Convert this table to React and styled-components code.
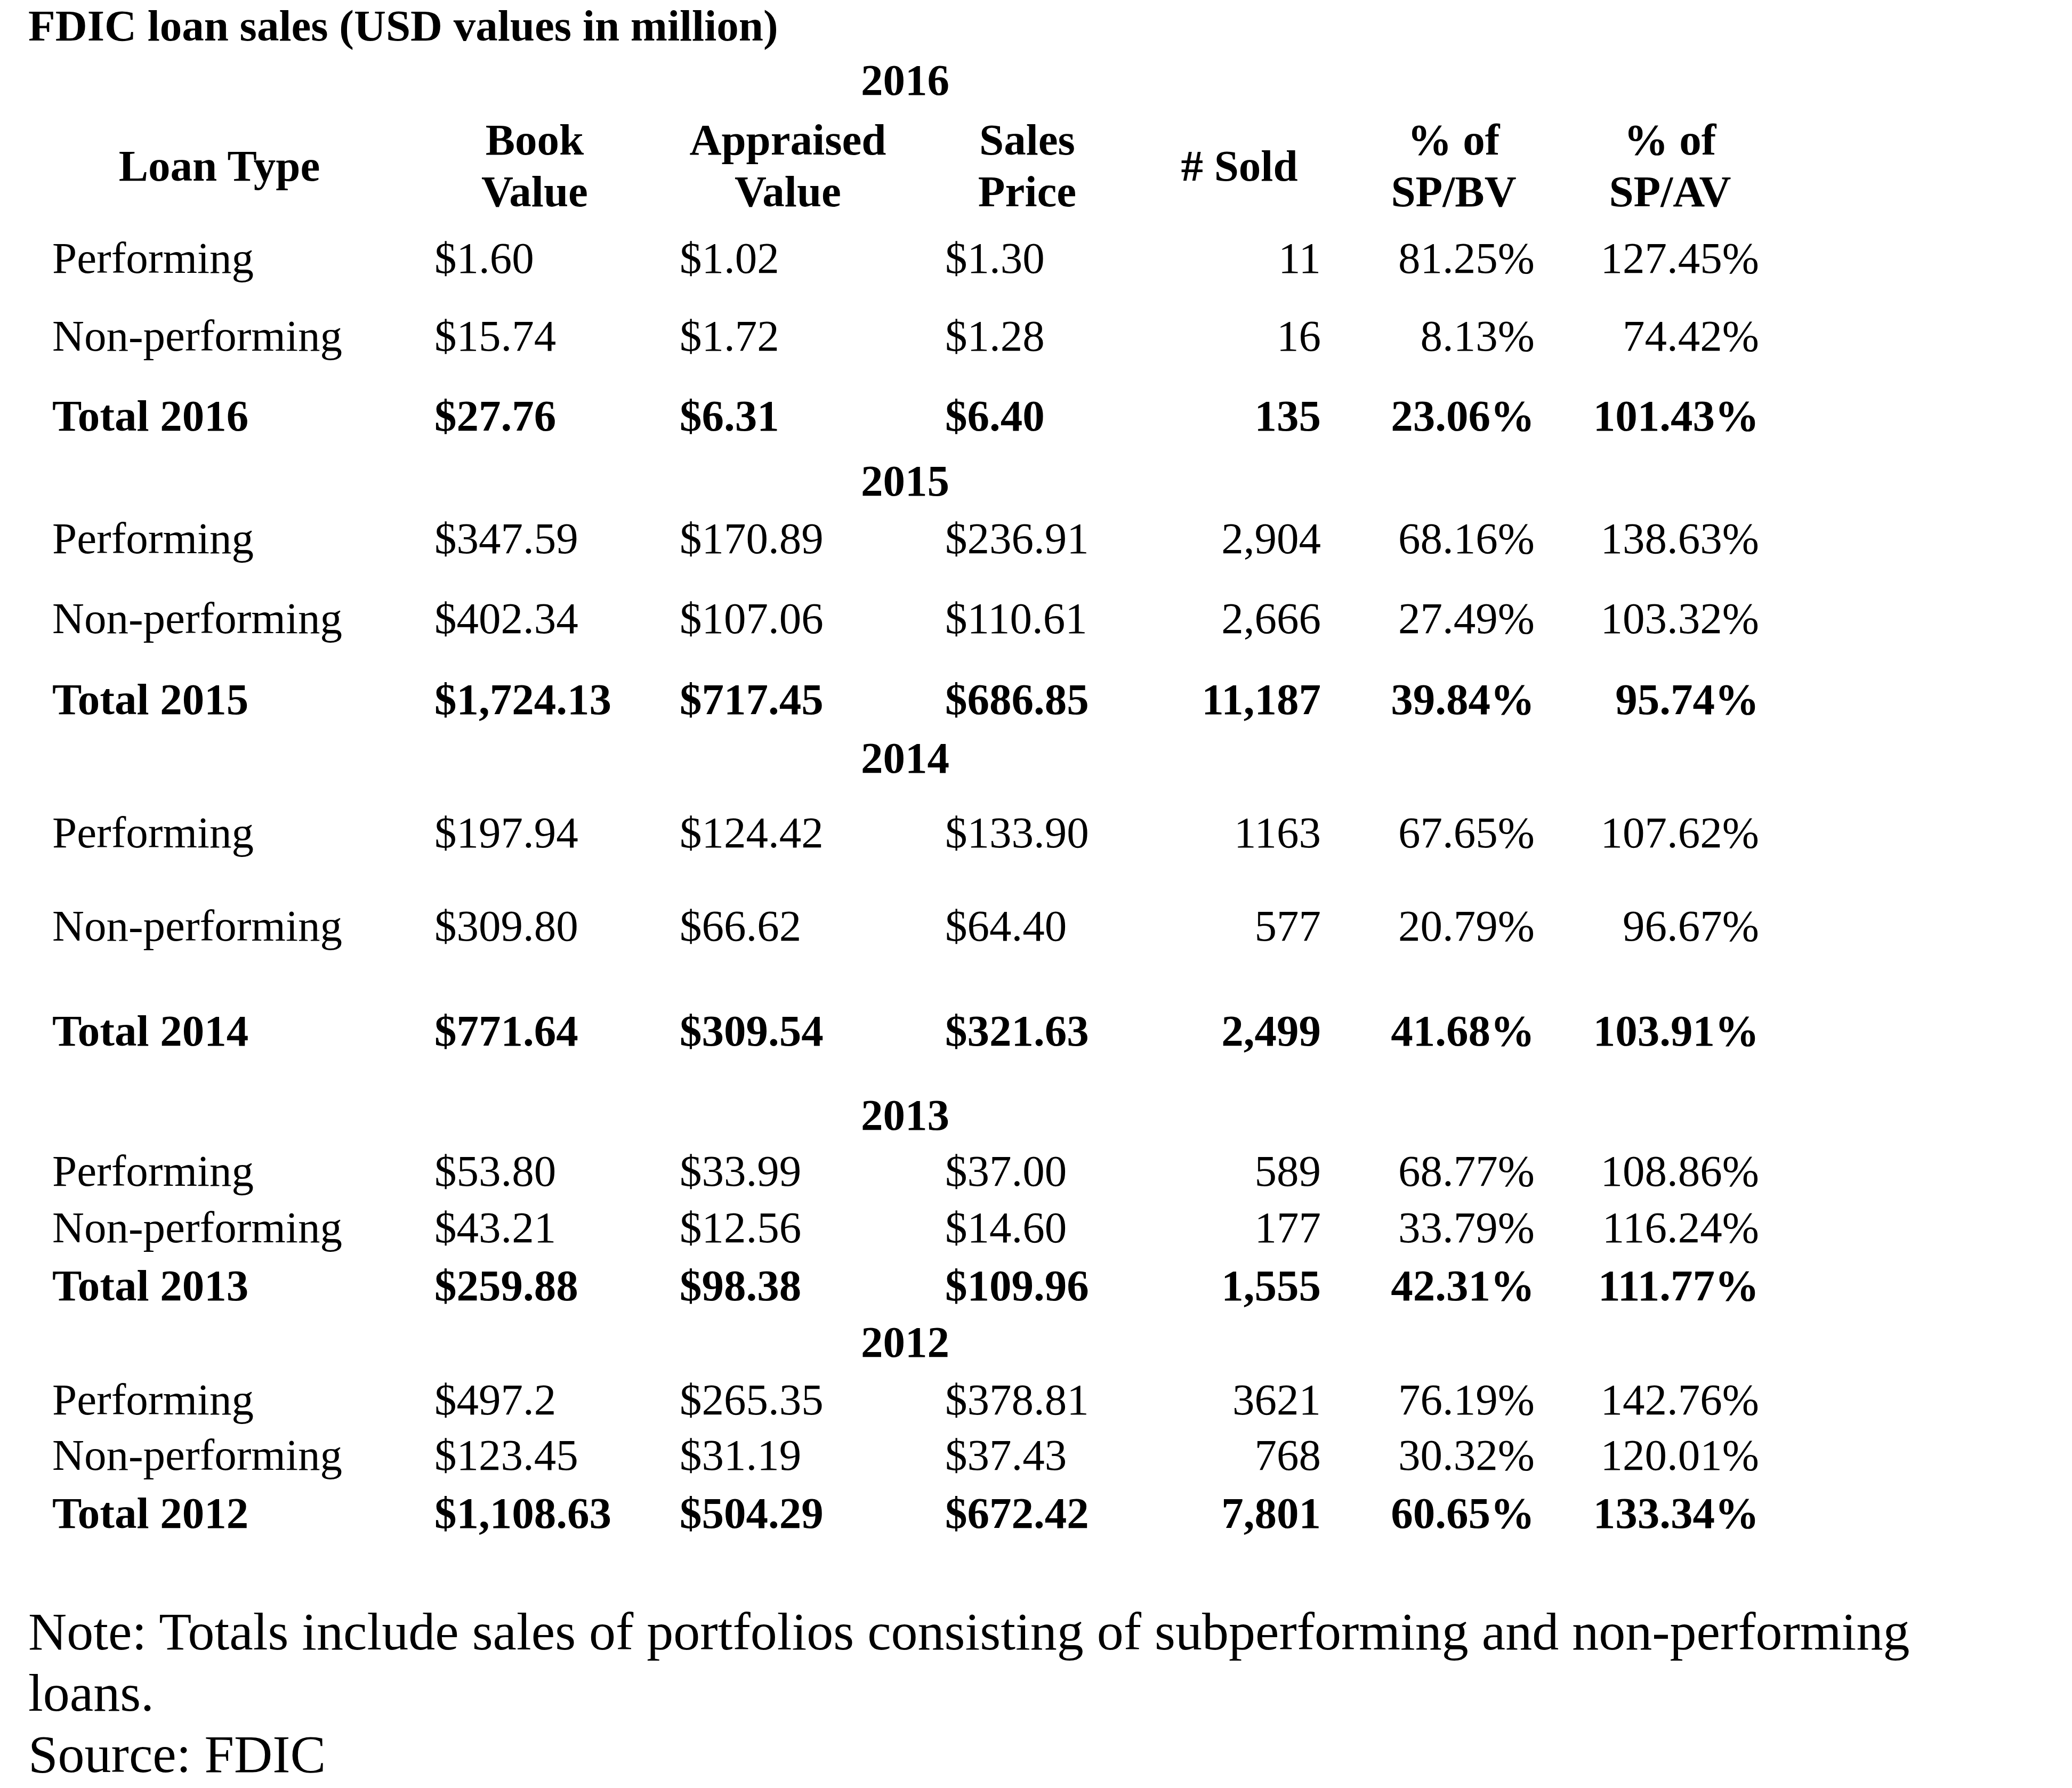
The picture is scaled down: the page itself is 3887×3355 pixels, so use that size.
import React from 'react';
import styled, { createGlobalStyle } from 'styled-components';

const GlobalStyle = createGlobalStyle`
  html, body {
    margin: 0;
    padding: 0;
    background: #ffffff;
  }
  body {
    font-family: "Liberation Serif", "Times New Roman", serif;
    color: #000000;
  }
`;

const columns = [
  { width: 717, align: 'left', pad: 45 },
  { width: 466, align: 'left', pad: 45 },
  { width: 484, align: 'left', pad: 39 },
  { width: 414, align: 'left', pad: 53 },
  { width: 382, align: 'right', pad: 38 },
  { width: 422, align: 'right', pad: 59 },
  { width: 390, align: 'right', pad: 28 },
];

const headers = [
  ['Loan Type'],
  ['Book', 'Value'],
  ['Appraised', 'Value'],
  ['Sales', 'Price'],
  ['# Sold'],
  ['% of', 'SP/BV'],
  ['% of', 'SP/AV'],
];

const sections = [
  {
    year: '2016',
    h: 112,
    rows: [
      { h: 146, cells: ['Performing', '$1.60', '$1.02', '$1.30', '11', '81.25%', '127.45%'] },
      { h: 150, cells: ['Non-performing', '$15.74', '$1.72', '$1.28', '16', '8.13%', '74.42%'] },
      { h: 122, bold: true, cells: ['Total 2016', '$27.76', '$6.31', '$6.40', '135', '23.06%', '101.43%'] },
    ],
  },
  {
    year: '2015',
    h: 108,
    rows: [
      { h: 150, cells: ['Performing', '$347.59', '$170.89', '$236.91', '2,904', '68.16%', '138.63%'] },
      { h: 152, cells: ['Non-performing', '$402.34', '$107.06', '$110.61', '2,666', '27.49%', '103.32%'] },
      { h: 110, bold: true, cells: ['Total 2015', '$1,724.13', '$717.45', '$686.85', '11,187', '39.84%', '95.74%'] },
    ],
  },
  {
    year: '2014',
    h: 140,
    rows: [
      { h: 175, cells: ['Performing', '$197.94', '$124.42', '$133.90', '1163', '67.65%', '107.62%'] },
      { h: 197, cells: ['Non-performing', '$309.80', '$66.62', '$64.40', '577', '20.79%', '96.67%'] },
      { h: 158, bold: true, cells: ['Total 2014', '$771.64', '$309.54', '$321.63', '2,499', '41.68%', '103.91%'] },
    ],
  },
  {
    year: '2013',
    h: 105,
    rows: [
      { h: 106, cells: ['Performing', '$53.80', '$33.99', '$37.00', '589', '68.77%', '108.86%'] },
      { h: 109, cells: ['Non-performing', '$43.21', '$12.56', '$14.60', '177', '33.79%', '116.24%'] },
      { h: 106, bold: true, cells: ['Total 2013', '$259.88', '$98.38', '$109.96', '1,555', '42.31%', '111.77%'] },
    ],
  },
  {
    year: '2012',
    h: 108,
    rows: [
      { h: 104, cells: ['Performing', '$497.2', '$265.35', '$378.81', '3621', '76.19%', '142.76%'] },
      { h: 109, cells: ['Non-performing', '$123.45', '$31.19', '$37.43', '768', '30.32%', '120.01%'] },
      { h: 213, bold: true, cells: ['Total 2012', '$1,108.63', '$504.29', '$672.42', '7,801', '60.65%', '133.34%'] },
    ],
  },
];

const App = () => (
  <Page>
    <GlobalStyle />
    <Title>FDIC loan sales (USD values in million)</Title>
    <Table>
      {sections.map((section, si) => (
        <React.Fragment key={section.year}>
          <YearRow $h={section.h}>{section.year}</YearRow>
          {si === 0 && (
            <HeaderRow>
              {headers.map((lines, i) => (
                <HeaderCell key={i}>
                  {lines.map((line) => (
                    <div key={line}>{line}</div>
                  ))}
                </HeaderCell>
              ))}
            </HeaderRow>
          )}
          {section.rows.map((row) => (
            <Row key={row.cells[0]} $h={row.h} $bold={row.bold}>
              {row.cells.map((cell, ci) => (
                <Cell key={ci} $align={columns[ci].align} $pad={columns[ci].pad}>
                  {cell}
                </Cell>
              ))}
            </Row>
          ))}
        </React.Fragment>
      ))}
    </Table>
    <Note>
      Note: Totals include sales of portfolios consisting of subperforming and non-performing loans.
      <br />
      Source: FDIC
    </Note>
  </Page>
);

export default App;

const Page = styled.div`
  padding-left: 53px;
  font-family: "Liberation Serif", "Times New Roman", serif;
`;

const Title = styled.div`
  font-size: 83px;
  font-weight: 700;
  line-height: 97px;
  height: 102px;
  white-space: nowrap;
`;

const Table = styled.div`
  display: grid;
  grid-template-columns: ${columns.map((c) => `${c.width}px`).join(' ')};
  width: ${columns.reduce((s, c) => s + c.width, 0)}px;
  font-size: 83px;
  line-height: 97px;
`;

const YearRow = styled.div`
  grid-column: 1 / -1;
  height: ${(p) => p.$h}px;
  padding-left: 15px;
  text-align: center;
  font-weight: 700;
`;

const HeaderRow = styled.div`
  grid-column: 1 / -1;
  display: grid;
  grid-template-columns: subgrid;
  align-items: center;
  box-sizing: border-box;
  height: 222px;
  padding-bottom: 28px;
  font-weight: 700;
`;

const HeaderCell = styled.div`
  text-align: center;
  white-space: nowrap;
`;

const Row = styled.div`
  grid-column: 1 / -1;
  display: grid;
  grid-template-columns: subgrid;
  align-items: start;
  height: ${(p) => p.$h}px;
  font-weight: ${(p) => (p.$bold ? 700 : 400)};
`;

const Cell = styled.div`
  text-align: ${(p) => p.$align};
  padding-left: ${(p) => (p.$align === 'left' ? p.$pad : 0)}px;
  padding-right: ${(p) => (p.$align === 'right' ? p.$pad : 0)}px;
  white-space: nowrap;
`;

const Note = styled.div`
  max-width: 3650px;
  font-size: 100px;
  line-height: 115px;
`;
